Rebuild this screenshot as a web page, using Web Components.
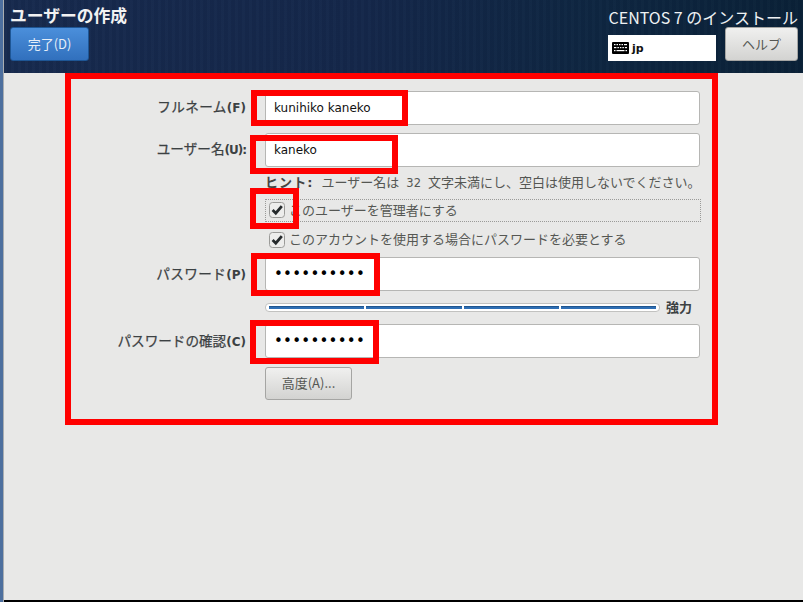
<!DOCTYPE html>
<html lang="ja"><head><meta charset="utf-8">
<style>
html,body{margin:0;padding:0;width:803px;height:602px;overflow:hidden;background:#e8e8e7}
body{font-family:"DejaVu Sans","Noto Sans CJK JP",sans-serif;color:#2e3436}
</style></head><body>
<install-spoke></install-spoke>
<template id="t-spoke">
<style>
:host{display:grid;grid-template-columns:4px 1fr;width:803px;height:602px;position:relative;overflow:hidden;font-family:"DejaVu Sans","Noto Sans CJK JP",sans-serif}
.edge{background:linear-gradient(90deg,#4d6f9e 0,#4d6f9e 3px,#a9adb0 3px)}
.main{display:flex;flex-direction:column;min-width:0;height:602px}
.body{flex:1;padding-top:18px;background:#e8e8e7;min-height:0}
.foot{height:2px;background:#000}
</style>
<div class="edge"></div>
<div class="main">
<spoke-header></spoke-header>
<div class="body"><user-form></user-form></div>
<div class="foot"></div>
</div>
<red-box style="left:65px;top:73px;width:653px;height:352px"></red-box>
<red-box style="left:251px;top:90px;width:157px;height:36px"></red-box>
<red-box style="left:250px;top:135px;width:148px;height:39px"></red-box>
<red-box style="left:250px;top:188px;width:49px;height:41px"></red-box>
<red-box style="left:251px;top:253px;width:129px;height:43px"></red-box>
<red-box style="left:250px;top:320px;width:129px;height:44px"></red-box>
</template>
<template id="t-header">
<style>
:host{display:flex;justify-content:space-between;height:73px;box-sizing:border-box;padding:0 5px 0 6px;background:repeating-linear-gradient(90deg,rgba(255,255,255,.012) 0 3px,rgba(0,0,0,.025) 3px 7px),linear-gradient(90deg,#172a4e 0,#14274a 45%,#0e2641 75%,#0a2137 100%);color:#fff}
.l{display:flex;flex-direction:column;align-items:flex-start}
h1{margin:6px 0 0;font-size:16.8px;line-height:20px;font-weight:700;color:#f2f2f2;white-space:nowrap;font-family:inherit}
.r{display:flex;flex-direction:column;align-items:flex-end}
.t{font-size:16px;line-height:20px;margin-top:7px;color:#eef1f3;white-space:nowrap;font-family:"Noto Sans CJK JP","DejaVu Sans",sans-serif;font-weight:400}
.row{display:flex;gap:9px;align-items:flex-start;margin-top:0}
.kb{width:108px;height:26px;margin-top:8px;background:#fff;color:#111;display:flex;align-items:center;gap:3px;box-sizing:border-box;padding-left:4px;font-size:11px;font-weight:700}
.kb svg{display:block}
</style>
<div class="l"><h1>ユーザーの作成</h1><ui-button kind="blue" style="margin-top:1px;margin-left:0">完了(D)</ui-button></div>
<div class="r"><div class="t">CENTOS 7 のインストール</div>
<div class="row"><div class="kb"><svg width="17" height="12" viewBox="0 0 17 12"><rect width="17" height="12" rx="1" fill="#000"/><g fill="#fff"><rect x="2" y="2" width="1.5" height="1.2"/><rect x="4.5" y="2" width="1.5" height="1.2"/><rect x="7" y="2" width="1.5" height="1.2"/><rect x="9.5" y="2" width="1.5" height="1.2"/><rect x="12" y="2" width="3" height="1.2"/><rect x="2" y="5" width="2.4" height="1.2"/><rect x="5.4" y="5" width="1.5" height="1.2"/><rect x="7.9" y="5" width="1.5" height="1.2"/><rect x="10.4" y="5" width="1.5" height="1.2"/><rect x="12.9" y="5" width="2.1" height="1.2"/><rect x="2" y="8" width="1.5" height="1.2"/><rect x="4.5" y="8" width="8" height="1.2"/><rect x="13.5" y="8" width="1.5" height="1.2"/></g></svg><span>jp</span></div>
<ui-button kind="grey" style="width:73px;height:34px">ヘルプ</ui-button></div></div>
</template>
<template id="t-button">
<style>
:host{display:inline-flex;align-items:center;justify-content:center;box-sizing:border-box;border-radius:3px;font-size:13px;white-space:nowrap;font-family:"Noto Sans CJK JP","DejaVu Sans",sans-serif;padding-bottom:2px}
:host([kind=blue]){width:79px;height:34px;margin-left:0;background:linear-gradient(#4b8fdb,#3170bd);border:1px solid #1e5695;color:#e6eef8}
:host([kind=grey]){width:87px;height:34px;background:linear-gradient(#f0f0ef,#d3d3d1);border:1px solid #a5a5a3;color:#555753}
</style><slot></slot>
</template>
<template id="t-form">
<style>
:host{display:grid;grid-template-columns:242px 435px;column-gap:19px;width:696px;font-size:13px;color:#2e3436}
.lab{justify-self:end;color:#3c4143;white-space:nowrap;height:34px;line-height:31px;font-size:13.6px;font-family:"Noto Sans CJK JP",sans-serif;-webkit-text-stroke:.25px #3c4143}
.lab.p{line-height:33px}
.lab.w{letter-spacing:.4px}
.lab b{font:700 12px "DejaVu Sans",sans-serif;-webkit-text-stroke:0;letter-spacing:0}
.lab b.n{letter-spacing:-1px}
.c2{grid-column:2}
.hint{height:32px;line-height:31px;font-size:13px;color:#555753;white-space:nowrap;display:flex;gap:8px;align-items:baseline}
.hint b{color:#444;font-weight:700;letter-spacing:1.1px}
.hint i{font:11.5px "DejaVu Sans",sans-serif;margin:0 7px}
.m1{margin-bottom:8px}
.chk1{height:23px;border:1px dotted #9a9a98;box-sizing:border-box;display:flex;align-items:center;padding:0 0 1px 3px;gap:4px;font-size:13px;color:#555753;white-space:nowrap;width:436px}
.chk2{height:35px;display:flex;align-items:center;padding:0 0 0 4px;gap:4px;font-size:13px;color:#555753;white-space:nowrap}
.chk1 span,.chk2 span{margin-top:-2px}
.meter{display:flex;align-items:center;gap:6px;height:33px;padding-bottom:2px;box-sizing:border-box;font-size:13px;font-weight:700;color:#3c4143;white-space:nowrap}
.bar{flex:1;height:9px;margin-top:1px;background:#fff;border:1px solid #c2c2c0;border-radius:4px;display:flex;gap:2px;padding:2px 3px;box-sizing:border-box}
.bar i{flex:1;background:#2f6fb5;box-shadow:inset 0 1px #1f5690}
.mt{margin-top:9px}
</style>
<div class="lab w">フルネーム<b>(F)</b></div><text-field class="m1" value="kunihiko kaneko"></text-field>
<div class="lab">ユーザー名<b class="n">(U):</b></div><text-field value="kaneko"></text-field>
<div class="hint c2"><b>ヒント:</b><span>ユーザー名は<i style="font-style:normal">32</i>文字未満にし、空白は使用しないでください。</span></div>
<div class="c2 chk1"><check-box></check-box><span>このユーザーを管理者にする</span></div>
<div class="c2 chk2"><check-box></check-box><span>このアカウントを使用する場合にパスワードを必要とする</span></div>
<div class="lab w p">パスワード<b>(P)</b></div><text-field value="••••••••••" secret></text-field>
<div class="meter c2"><div class="bar"><i></i><i></i><i></i><i></i></div><span style="margin-right:8px">強力</span></div>
<div class="lab p">パスワードの確認<b>(C)</b></div><text-field value="••••••••••" secret></text-field>
<div class="c2 mt"><ui-button kind="grey" style="height:33px">高度(A)...</ui-button></div>
</template>
<template id="t-field">
<style>
:host{display:block;height:34px;box-sizing:border-box;background:#fff;border:1px solid #b6b6b4;border-radius:3px;padding-left:8px;line-height:33px;font-size:12px;color:#111;white-space:nowrap}
:host([secret]){font-size:15px;line-height:33px;letter-spacing:.25px;color:#000}
</style><span id="v"></span>
</template>
<template id="t-check">
<style>
:host{display:inline-block;width:16px;height:16px;flex:none}
svg{display:block}
</style><svg width="16" height="16" viewBox="0 0 16 16"><rect x=".5" y=".5" width="15" height="15" rx="3" fill="#ededec" stroke="#9b9b99"/><path d="M3.6 8 6.8 11.2 12.8 4.2" fill="none" stroke="#262b2d" stroke-width="2.8"/></svg>
</template>
<script>
function def(name,tid,init){customElements.define(name,class extends HTMLElement{constructor(){super();const r=this.attachShadow({mode:"open"});r.appendChild(document.getElementById(tid).content.cloneNode(true));}connectedCallback(){if(init)init(this);}});}
def("install-spoke","t-spoke");
def("spoke-header","t-header");
def("ui-button","t-button");
def("user-form","t-form");
def("check-box","t-check");
def("text-field","t-field",e=>{e.shadowRoot.getElementById("v").textContent=e.getAttribute("value")});
customElements.define("red-box",class extends HTMLElement{constructor(){super();this.attachShadow({mode:"open"}).innerHTML='<style>:host{display:block;position:absolute;box-sizing:border-box;border:6px solid #f00;pointer-events:none}</style>';}});
</script>
</body></html>
